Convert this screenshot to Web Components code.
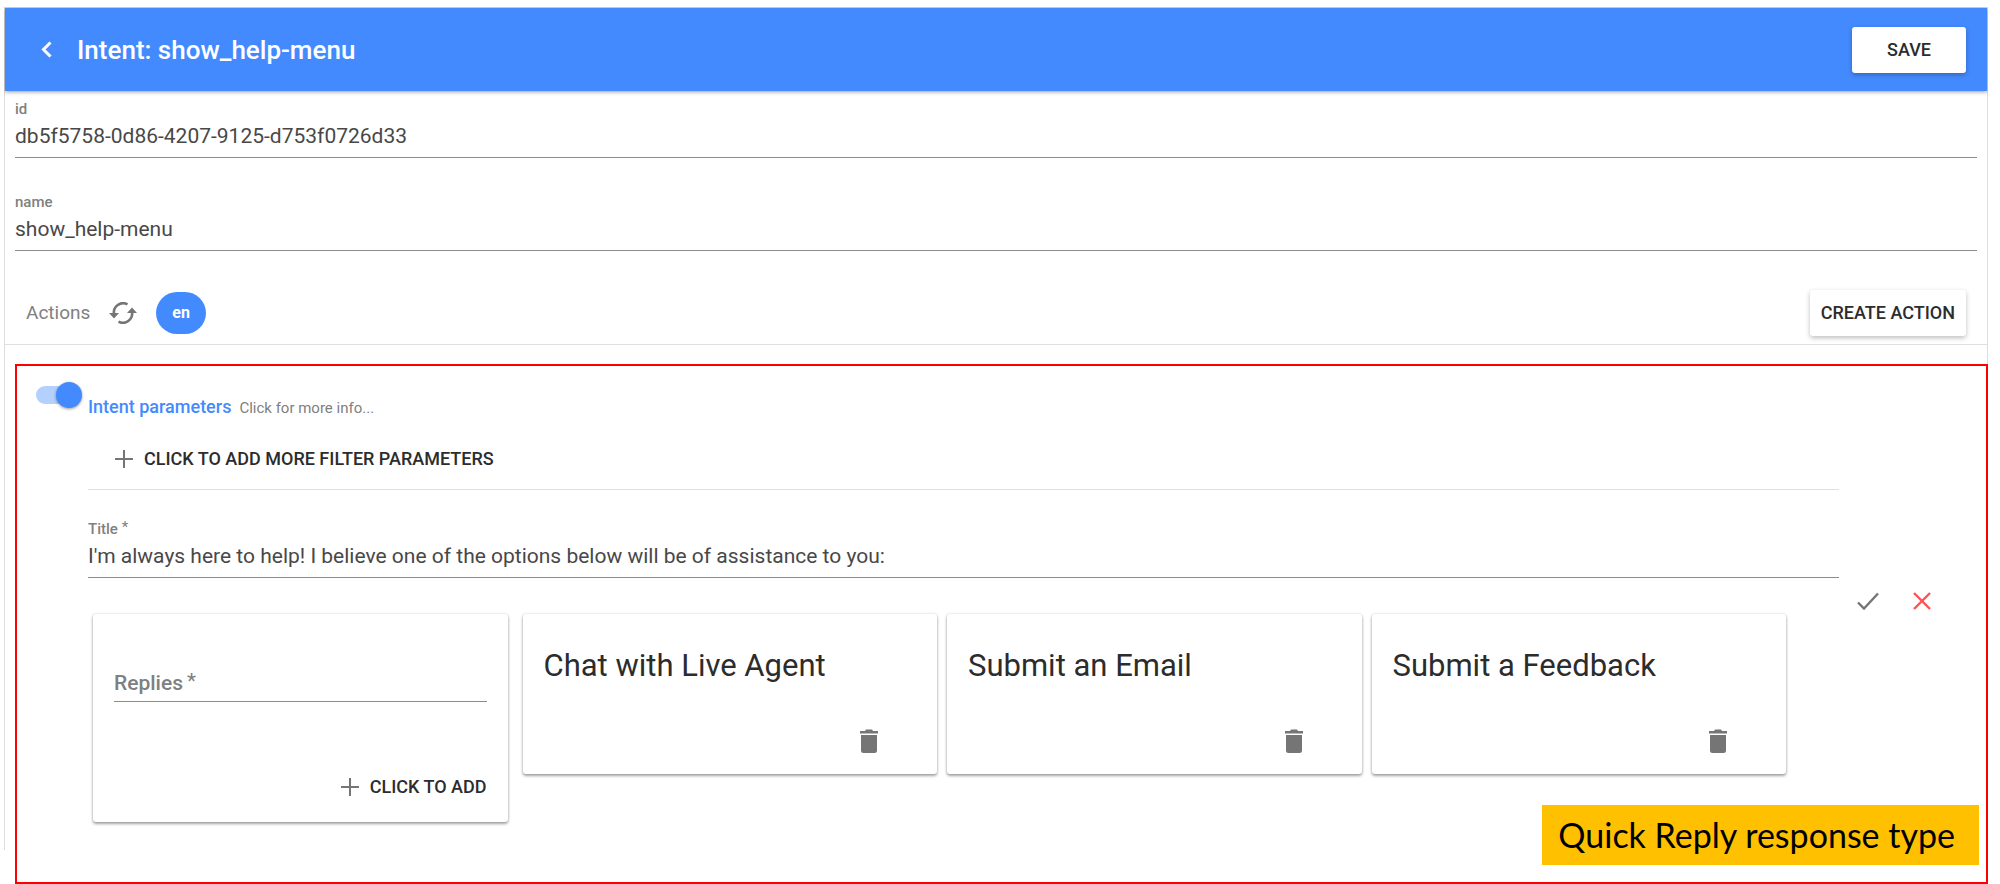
<!DOCTYPE html>
<html lang="en">
<head>
<meta charset="utf-8">
<title>Intent: show_help-menu</title>
<style>
body { margin: 7px 12px 0 4px; background: #fff; color: #212121; font-family: Roboto, "Open Sans", sans-serif; font-size: 18px; }
</style>
</head>
<body>
<intent-page></intent-page>
<script>
const define = (name, html, setup) => customElements.define(name, class extends HTMLElement {
  constructor() {
    super();
    const t = document.createElement('template');
    t.innerHTML = html;
    this.attachShadow({ mode: 'open' }).append(t.content.cloneNode(true));
  }
  connectedCallback() { if (setup) setup(this, this.shadowRoot); }
});

const icons = {
  back: [11, 17, '<path d="M9.5 1.5 2.5 8.5l7 7" fill="none" stroke="currentColor" stroke-width="3"/>'],
  plus: [18, 18, '<path d="M9 0v18M0 9h18" stroke="currentColor" stroke-width="2"/>'],
  check: [22, 18, '<path d="M1 10.500l6 6L21 1.500" fill="none" stroke="currentColor" stroke-width="2.400"/>'],
  close: [18, 18, '<path d="M1 1l16 16M17 1 1 17" stroke="currentColor" stroke-width="2.400"/>'],
  trash: [18, 24, '<path d="M0 2h5l1-1.500h6L13 2h5v2.500H0zM1 6h16v15.500a2.500 2.500 0 0 1-2.500 2.500h-11A2.500 2.500 0 0 1 1 21.500z" fill="currentColor"/>'],
  loop: [28, 22, '<path d="M18.500 2.300A9.300 9.300 0 0 0 5 12M9.500 19.700A9.300 9.300 0 0 0 23 10" fill="none" stroke="currentColor" stroke-width="2.600"/><path d="M0 11h10l-5 5.500zM18 11h10l-5-5.500z" fill="currentColor"/>']
};

define('ui-icon', `<style>:host{display:inline-flex;flex:none}svg{display:block}</style>`, (el, root) => {
  const [w, h, body] = icons[el.getAttribute('name')];
  root.querySelector('style').insertAdjacentHTML('afterend',
    `<svg width="${w}" height="${h}" viewBox="0 0 ${w} ${h}" aria-hidden="true">${body}</svg>`);
});

define('ui-button', `<style>
  :host { display: block; flex: none; }
  button { display: flex; align-items: center; justify-content: center; gap: 11px; box-sizing: border-box;
    width: 100%; height: 46px; margin: 0; padding: 0 11px; border: 0; border-radius: 3px; background: none;
    color: #2c2c2c; font: 500 18px/24px Roboto, sans-serif; white-space: nowrap; cursor: pointer; }
  ::slotted(ui-icon) { color: #757575; }
  :host([raised]) button { background: #fff; box-shadow: 0 2px 5px rgba(0,0,0,.26); }
  :host([raised]) { min-width: 114px; }
  :host([flat]) button { padding: 0; }
  :host([icon]) button { width: 50px; height: 50px; padding: 0; }
  :host([warn]) ::slotted(ui-icon) { color: #ff5252; }
  :host([light]) ::slotted(ui-icon) { color: #fff; }
</style><button type="button"><slot></slot></button>`, (el, root) => {
  if (el.hasAttribute('name')) root.querySelector('button').setAttribute('aria-label', el.getAttribute('name'));
});

define('text-field', `<style>
  :host { display: block; position: relative; }
  label { display: block; color: #808080; font: 500 15px/20px Roboto, sans-serif; }
  sup { font-size: inherit; line-height: 0; vertical-align: 2px; margin-left: 4px; font-weight: 400; }
  input { display: block; box-sizing: border-box; width: 100%; height: 36px; margin: 3px 0 0; padding: 0 0 7px;
    border: 0; border-bottom: 1px solid #8c8c8c; border-radius: 0; outline: 0; background: none; color: #484848;
    font: 400 21px/28px Roboto, sans-serif; }
  :host([empty]) input { margin: 0; }
  :host([empty]) label { position: absolute; inset: 0 0 auto; font-size: 21px; line-height: 34px; }
</style><label for="box"></label><input id="box" type="text">`, (el, root) => {
  const label = root.querySelector('label');
  label.textContent = el.getAttribute('label');
  if (el.hasAttribute('required')) label.insertAdjacentHTML('beforeend', '<sup>*</sup>');
  root.querySelector('input').value = el.getAttribute('value') || '';
});

define('page-header', `<style>
  :host { display: block; }
  header { display: flex; align-items: center; position: relative; height: 83px; padding: 0 21px 0 16px;
    background: #448aff; color: #fff; box-shadow: 0 1px 4px rgba(0,0,0,.4); }
  h1 { flex: 1; margin: 0 0 0 6px; font: 500 26px/32px Roboto, sans-serif; }
</style><header>
  <ui-button icon light name="Back"><ui-icon name="back"></ui-icon></ui-button>
  <h1><slot></slot></h1>
  <ui-button raised>SAVE</ui-button>
</header>`);

define('action-bar', `<style>
  :host { display: flex; align-items: center; padding: 37px 21px 6px; border-bottom: 1px solid #e0e0e0; }
  h2 { margin: 0 8px 0 0; color: #808080; font: 400 19px/24px Roboto, sans-serif; }
  .lang { box-sizing: border-box; height: 42px; margin: 0 auto 0 8px; padding: 0 16px; border: 0; border-radius: 21px;
    background: #448aff; color: #fff; font: 700 16px/24px Roboto, sans-serif; }
</style>
<h2>Actions</h2>
<ui-button icon name="Refresh"><ui-icon name="loop"></ui-icon></ui-button>
<button class="lang" type="button">en</button>
<ui-button raised>CREATE ACTION</ui-button>`);

define('toggle-switch', `<style>
  :host { display: block; width: 46px; height: 26px; }
  input { display: flex; align-items: center; justify-content: flex-end; appearance: none; width: 43px; height: 18px;
    margin: 4px 0; border-radius: 9px; background: #b4d0ff; }
  input::before { content: ""; flex: none; width: 26px; height: 26px; margin-right: -3px; border-radius: 50%;
    background: #448aff; box-shadow: 0 1px 3px rgba(0,0,0,.4); }
</style><input type="checkbox" checked aria-label="Action enabled">`);

define('reply-card', `<style>
  :host { display: flex; flex-direction: column; align-items: flex-end; box-sizing: border-box; min-width: 0;
    padding: 32px 21px 8px; border-radius: 3px; background: #fff;
    box-shadow: 0 2px 3px rgba(0,0,0,.34), 0 0 3px rgba(0,0,0,.16); }
  h3 { align-self: stretch; margin: 0 0 30px; color: #2c2c2c; font: 400 31px/40px Roboto, sans-serif; }
  ui-button { margin-right: 22px; }
</style><h3><slot></slot></h3><ui-button icon name="Delete reply"><ui-icon name="trash"></ui-icon></ui-button>`);

define('reply-form', `<style>
  :host { display: flex; flex-direction: column; align-items: flex-end; box-sizing: border-box; min-width: 0;
    margin-right: 5px; padding: 52px 21px 12px; border-radius: 3px; background: #fff;
    box-shadow: 0 2px 3px rgba(0,0,0,.34), 0 0 3px rgba(0,0,0,.16); }
  text-field { align-self: stretch; margin-bottom: 62px; }
</style><text-field empty required label="Replies"></text-field>
<ui-button flat><ui-icon name="plus"></ui-icon>CLICK TO ADD</ui-button>`);

define('action-editor', `<style>
  :host { display: flex; align-items: center; position: relative; padding: 9px 39px 55px 19px; border: 2px solid #f00; }
  toggle-switch { align-self: flex-start; margin: 7px 6px 0 0; }
  .form { flex: 1; min-width: 0; padding: 20px 0 5px; }
  .head { display: flex; align-items: baseline; gap: 8px; margin-bottom: 16px; line-height: 24px; }
  h2 { margin: 0; color: #448aff; font: 500 18px/24px Roboto, sans-serif; }
  a { color: #808080; font-size: 15px; text-decoration: none; }
  .filter { display: flex; padding: 0 27px 7px; margin-bottom: 29px; border-bottom: 1px solid #e0e0e0; }
  .cards { display: flex; align-items: flex-start; gap: 10px; margin: 36px 53px 0 5px; }
  .cards > * { flex: 1 1 0; }
  .tools { display: flex; gap: 4px; margin-left: 4px; }
  .note { position: absolute; right: 7px; bottom: 17px; padding: 0 24px 0 16px; background: #ffc000; color: #000;
    font: 400 34px/60px Lato, sans-serif; white-space: nowrap; }
</style>
<toggle-switch></toggle-switch>
<div class="form">
  <div class="head"><h2>Intent parameters</h2><a href="#info">Click for more info...</a></div>
  <div class="filter"><ui-button flat><ui-icon name="plus"></ui-icon>CLICK TO ADD MORE FILTER PARAMETERS</ui-button></div>
  <text-field required label="Title" value="I'm always here to help! I believe one of the options below will be of assistance to you:"></text-field>
  <div class="cards">
    <reply-form></reply-form>
    <reply-card>Chat with Live Agent</reply-card>
    <reply-card>Submit an Email</reply-card>
    <reply-card>Submit a Feedback</reply-card>
  </div>
</div>
<div class="tools">
  <ui-button icon name="Accept"><ui-icon name="check"></ui-icon></ui-button>
  <ui-button icon warn name="Discard"><ui-icon name="close"></ui-icon></ui-button>
</div>
<div class="note">Quick Reply response type</div>`);

define('intent-page', `<style>
  :host { display: block; position: relative; padding: 1px 1px 0; }
  /* the page outline ends above the foot of the action editor */
  :host::before { content: ""; position: absolute; inset: 0 0 34px; border: 1px solid #ddd; border-bottom: 0; pointer-events: none; }
  .fields { display: grid; gap: 34px; padding: 8px 10px 0; }
  action-editor { margin: 19px -1px 0 10px; }
</style>
<page-header>Intent: show_help-menu</page-header>
<main>
  <div class="fields">
    <text-field label="id" value="db5f5758-0d86-4207-9125-d753f0726d33"></text-field>
    <text-field label="name" value="show_help-menu"></text-field>
  </div>
  <action-bar></action-bar>
  <action-editor></action-editor>
</main>`);
</script>
</body>
</html>
